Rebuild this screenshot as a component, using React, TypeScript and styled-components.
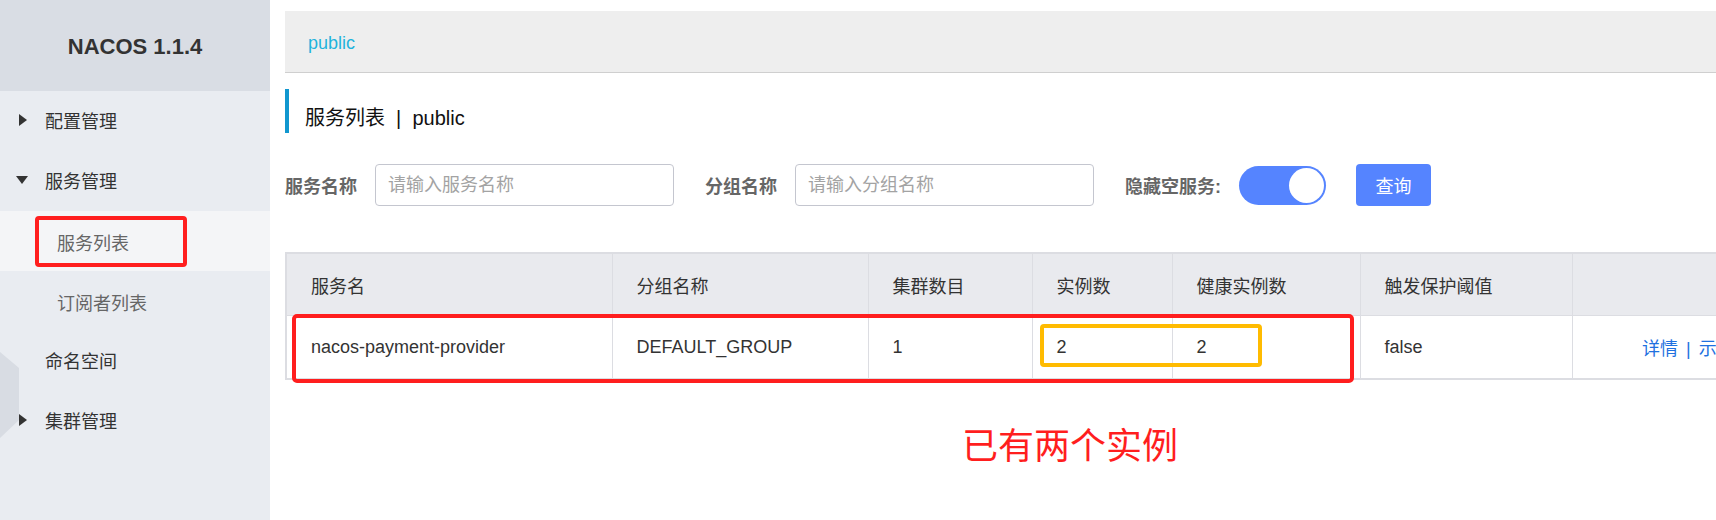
import React from "react";
import styled, { createGlobalStyle } from "styled-components";

const GlobalStyle = createGlobalStyle`
  html, body {
    margin: 0;
    padding: 0;
    background: #fff;
  }
  body {
    font-family: "Liberation Sans", "Noto Sans CJK SC", sans-serif;
    color: #333;
  }
`;

type Service = {
  name: string;
  group: string;
  clusters: number;
  instances: number;
  healthy: number;
  threshold: string;
};

const services: Service[] = [
  {
    name: "nacos-payment-provider",
    group: "DEFAULT_GROUP",
    clusters: 1,
    instances: 2,
    healthy: 2,
    threshold: "false",
  },
];

const columns = [
  { title: "服务名", width: 326 },
  { title: "分组名称", width: 256 },
  { title: "集群数目", width: 164 },
  { title: "实例数", width: 140 },
  { title: "健康实例数", width: 188 },
  { title: "触发保护阈值", width: 212 },
  { title: "", width: 326 },
];

function App() {
  return (
    <Page>
      <GlobalStyle />
      <Sidebar>
        <Brand>NACOS 1.1.4</Brand>
        <Hexagon width="20" height="90" viewBox="0 0 20 90">
          <polygon points="0,2 19,18 19,70 0,88" fill="#d8dce3" />
        </Hexagon>
        <MenuItem>
          <Arrow $open={false} />
          配置管理
        </MenuItem>
        <MenuItem>
          <Arrow $open />
          服务管理
        </MenuItem>
        <SubItem $active>
          服务列表
          <MarkBox />
        </SubItem>
        <SubItem>订阅者列表</SubItem>
        <MenuItem>命名空间</MenuItem>
        <MenuItem>
          <Arrow $open={false} />
          集群管理
        </MenuItem>
      </Sidebar>

      <Main>
        <Crumb>public</Crumb>
        <TitleRow>
          服务列表&nbsp;&nbsp;|&nbsp;&nbsp;public
        </TitleRow>

        <SearchForm>
          <Field>
            <Label>服务名称</Label>
            <Input placeholder="请输入服务名称" />
          </Field>
          <Field>
            <Label>分组名称</Label>
            <Input placeholder="请输入分组名称" />
          </Field>
          <Field>
            <Label>隐藏空服务:</Label>
            <Toggle>
              <Knob />
            </Toggle>
          </Field>
          <QueryButton>查询</QueryButton>
        </SearchForm>

        <TableWrap>
          <Table>
            <colgroup>
              {columns.map((c, i) => (
                <col key={i} style={{ width: c.width }} />
              ))}
            </colgroup>
            <thead>
              <tr>
                {columns.map((c, i) => (
                  <Th key={i}>{c.title}</Th>
                ))}
              </tr>
            </thead>
            <tbody>
              {services.map((s) => (
                <tr key={s.name}>
                  <Td>{s.name}</Td>
                  <Td>{s.group}</Td>
                  <Td>{s.clusters}</Td>
                  <Td>{s.instances}</Td>
                  <Td>{s.healthy}</Td>
                  <Td>{s.threshold}</Td>
                  <Td $center>
                    <Link>详情</Link>
                    <Sep>|</Sep>
                    <Link>示例代码</Link>
                    <Sep>|</Sep>
                    <Link>删除</Link>
                  </Td>
                </tr>
              ))}
            </tbody>
          </Table>
          <RowMark />
          <CountMark />
        </TableWrap>

        <Note>已有两个实例</Note>
      </Main>
    </Page>
  );
}

const Page = styled.div`
  display: flex;
  width: 100%;
  height: 520px;
  overflow: hidden;
`;

const Sidebar = styled.aside`
  position: relative;
  flex: 0 0 270px;
  background: #e9ecf1;
`;

const Brand = styled.div`
  height: 91px;
  display: flex;
  align-items: center;
  justify-content: center;
  background: #d9dde4;
  font-size: 22px;
  font-weight: bold;
  color: #333;
  padding-top: 2px;
  box-sizing: border-box;
`;

const Hexagon = styled.svg`
  position: absolute;
  left: 0;
  top: 350px;
`;

const MenuItem = styled.div`
  position: relative;
  height: 60px;
  display: flex;
  align-items: center;
  padding-left: 45px;
  padding-bottom: 2px;
  box-sizing: border-box;
  font-size: 18px;
  color: #333;
`;

const Arrow = styled.span<{ $open: boolean }>`
  position: absolute;
  top: 50%;
  width: 0;
  height: 0;
  ${(p) =>
    p.$open
      ? `
    left: 16px;
    margin-top: -5px;
    border-left: 6px solid transparent;
    border-right: 6px solid transparent;
    border-top: 8px solid #333;
  `
      : `
    left: 19px;
    margin-top: -7px;
    border-top: 6px solid transparent;
    border-bottom: 6px solid transparent;
    border-left: 8px solid #333;
  `}
`;

const SubItem = styled.div<{ $active?: boolean }>`
  position: relative;
  height: 60px;
  display: flex;
  align-items: center;
  padding-left: 57px;
  padding-top: 1px;
  box-sizing: border-box;
  font-size: 18px;
  color: #666;
  background: ${(p) => (p.$active ? "#f4f5f7" : "transparent")};
`;

const MarkBox = styled.span`
  position: absolute;
  left: 35px;
  top: 5px;
  width: 152px;
  height: 51px;
  box-sizing: border-box;
  border: 4px solid #ff1e1e;
  border-radius: 4px;
`;

const Main = styled.main`
  flex: 1;
  min-width: 0;
  overflow: hidden;
  padding: 11px 0 0 15px;
`;

const Crumb = styled.div`
  height: 62px;
  box-sizing: border-box;
  display: flex;
  align-items: center;
  padding: 4px 0 0 23px;
  background: #eeeeee;
  border-bottom: 1px solid #cfcfcf;
  font-size: 18px;
  color: #1fb3dc;
`;

const TitleRow = styled.div`
  margin-top: 16px;
  height: 44px;
  box-sizing: border-box;
  border-left: 4px solid #1197cf;
  padding: 19px 0 0 16px;
  font-size: 20px;
  line-height: 1;
  color: #111;
`;

const SearchForm = styled.div`
  margin-top: 31px;
  display: flex;
  align-items: center;
  gap: 31px;
  height: 42px;
`;

const Field = styled.div`
  display: flex;
  align-items: center;
  gap: 18px;
`;

const Label = styled.span`
  font-size: 18px;
  font-weight: bold;
  color: #666;
  white-space: nowrap;
`;

const Input = styled.input`
  width: 299px;
  height: 42px;
  box-sizing: border-box;
  border: 1px solid #c4c6cf;
  border-radius: 4px;
  padding: 0 12px;
  font-family: inherit;
  font-size: 18px;
  color: #333;
  outline: none;
  &::placeholder {
    color: #a3a3a3;
  }
`;

const Toggle = styled.div`
  width: 87px;
  height: 39px;
  border-radius: 20px;
  background: #5584ff;
  display: flex;
  align-items: center;
  justify-content: flex-end;
  padding-right: 2px;
  box-sizing: border-box;
`;

const Knob = styled.span`
  width: 35px;
  height: 35px;
  border-radius: 50%;
  background: #fff;
`;

const QueryButton = styled.button`
  width: 75px;
  height: 42px;
  border: none;
  border-radius: 4px;
  background: #5584ff;
  color: #fff;
  font-family: inherit;
  font-size: 18px;
  padding: 0;
  margin-left: -1px;
`;

const TableWrap = styled.div`
  position: relative;
  margin-top: 46px;
  width: max-content;
`;

const Table = styled.table`
  border-collapse: collapse;
  table-layout: fixed;
  border: 2px solid #dcdde2;
  font-size: 18px;
  color: #333;
`;

const Th = styled.th`
  height: 61px;
  padding: 0 0 0 24px;
  background: #e9eaee;
  border: 1px solid #dcdde2;
  border-top: 2px solid #dcdde2;
  text-align: left;
  font-weight: normal;
  white-space: nowrap;
`;

const Td = styled.td<{ $center?: boolean }>`
  height: 62px;
  padding: 0 0 0 ${(p) => (p.$center ? "0" : "24px")};
  border: 1px solid #dcdde2;
  border-bottom: 2px solid #dcdde2;
  text-align: ${(p) => (p.$center ? "center" : "left")};
  white-space: nowrap;
`;

const Link = styled.a`
  color: #1f71e0;
  cursor: pointer;
`;

const Sep = styled.span`
  color: #1f71e0;
  margin: 0 8px;
`;

const RowMark = styled.span`
  position: absolute;
  left: 7px;
  top: 62px;
  width: 1062px;
  height: 69px;
  box-sizing: border-box;
  border: 4px solid #ff1e1e;
  border-radius: 5px;
`;

const CountMark = styled.span`
  position: absolute;
  left: 755px;
  top: 72px;
  width: 222px;
  height: 43px;
  box-sizing: border-box;
  border: 4px solid #ffbb00;
  border-radius: 4px;
`;

const Note = styled.div`
  margin: 49px 0 0 677px;
  font-size: 36px;
  line-height: 1;
  color: #ff1e1e;
`;

export default App;
